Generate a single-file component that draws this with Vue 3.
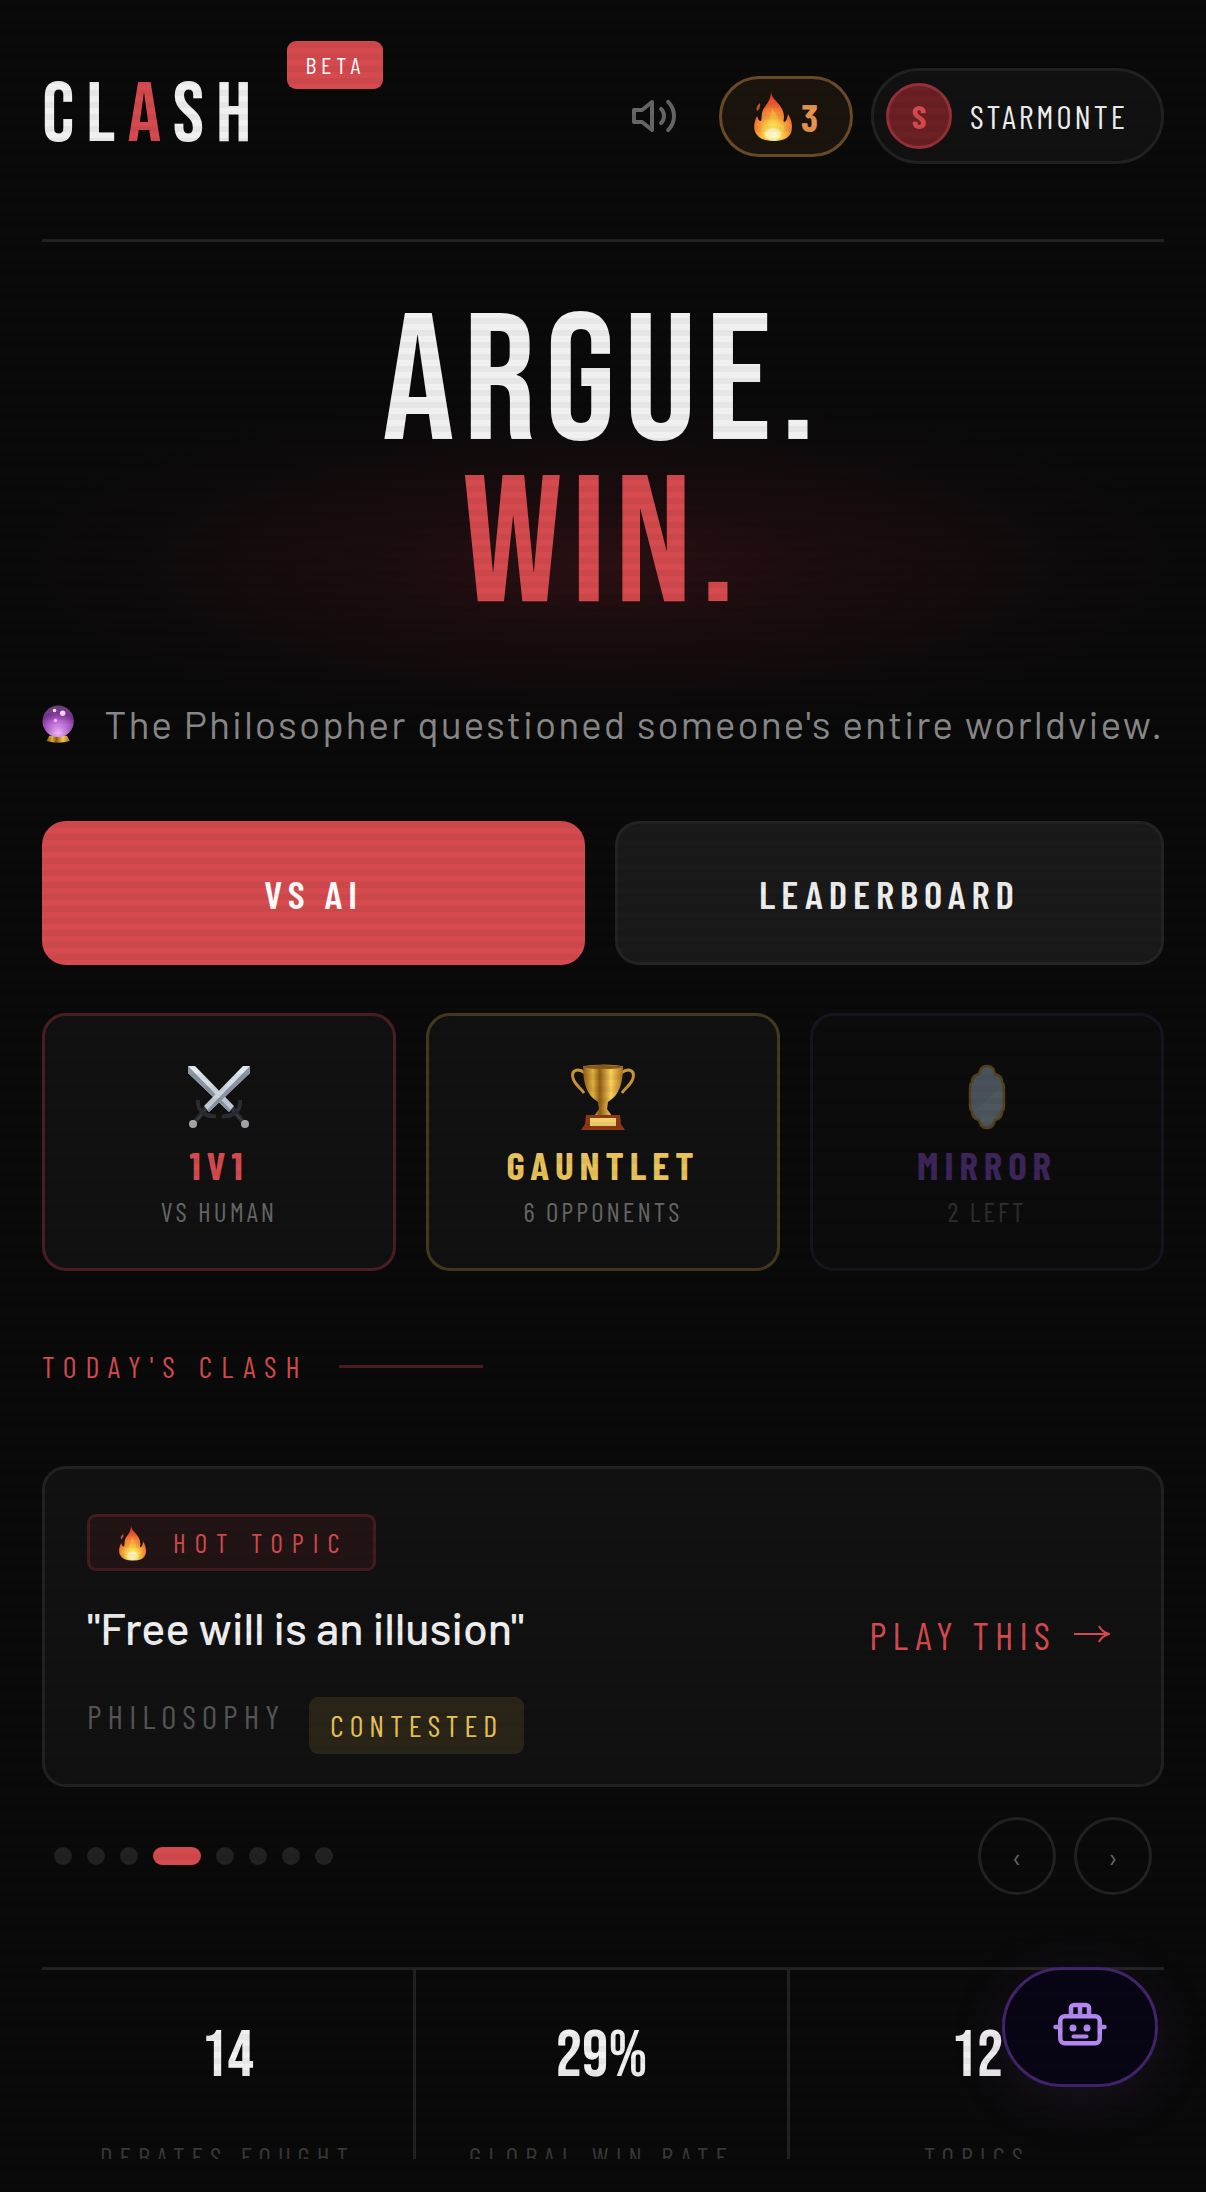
<template>
    <div class="app">
        <main class="page">
            <header class="header">
                <a class="logo" href="#">CL<span class="accent">A</span>SH<span class="beta">BETA</span></a>
                <div class="header-right">
                    <button class="sound" type="button" aria-label="Sound" @click="muted = !muted">
                        <svg viewBox="0 0 24 24" width="48" height="48" fill="none" stroke="currentColor" stroke-width="2" stroke-linecap="round" stroke-linejoin="round">
                            <path d="M11 5 6 9H2v6h4l5 4z" />
                            <path v-show="!muted" d="M15.54 8.46a5 5 0 0 1 0 7.07M19.07 4.93a10 10 0 0 1 0 14.14" />
                        </svg>
                    </button>
                    <div class="streak">
                        <svg class="flame" viewBox="0 0 38 50"><use href="#flame" /></svg>
                        <span>3</span>
                    </div>
                    <button class="profile" type="button">
                        <span class="avatar">S</span>
                        <span>STARMONTE</span>
                    </button>
                </div>
            </header>

            <section class="hero">
                <h1><span>ARGUE.</span><span class="accent">WIN.</span></h1>
                <p class="feed">
                    <svg class="ball" viewBox="0 0 36 42">
                        <path d="M8 34h20l3 6q-13 4-26 0z" fill="url(#gold)" />
                        <circle cx="18" cy="18" r="17.500" fill="url(#orb)" />
                        <circle cx="14" cy="6" r="2" fill="#ffe9ff" />
                        <circle cx="23" cy="9" r="3" fill="#f7d3fb" />
                        <circle cx="15" cy="17" r="2" fill="#f0b4fa" />
                    </svg>
                    <span>The Philosopher questioned someone's entire worldview.</span>
                </p>
            </section>

            <div class="actions">
                <button class="btn btn-primary" type="button">VS AI</button>
                <button class="btn btn-dark" type="button">LEADERBOARD</button>
            </div>

            <div class="modes">
                <button v-for="m in modes" :key="m.name" type="button" class="mode" :class="m.name">
                    <svg viewBox="0 0 66 66" width="66" height="66"><use :href="'#' + m.icon" /></svg>
                    <strong>{{ m.title }}</strong>
                    <small>{{ m.sub }}</small>
                </button>
            </div>

            <h2 class="section-label">TODAY'S CLASH</h2>

            <article class="topic">
                <div class="topic-info">
                    <span class="hot"><svg viewBox="0 0 38 50"><use href="#flame" /></svg>HOT TOPIC</span>
                    <h3>"Free will is an illusion"</h3>
                    <div class="meta">
                        <span class="category">PHILOSOPHY</span>
                        <span class="contested">CONTESTED</span>
                    </div>
                </div>
                <button class="play" type="button">
                    PLAY THIS
                    <svg viewBox="0 0 36 18" width="36" height="18" fill="none" stroke="currentColor" stroke-width="2"><path d="M0 9h34M25 1q3 6 10 8-7 2-10 8" /></svg>
                </button>
            </article>

            <div class="pager">
                <div class="dots">
                    <button v-for="i in 8" :key="i" type="button" class="dot" :class="{ active: i === current }" :aria-label="'Topic ' + i" @click="current = i"></button>
                </div>
                <div class="arrows">
                    <button type="button" aria-label="Previous" @click="step(-1)">‹</button>
                    <button type="button" aria-label="Next" @click="step(1)">›</button>
                </div>
            </div>

            <div class="stats">
                <div v-for="s in stats" :key="s.label" class="stat">
                    <b>{{ s.value }}</b>
                    <span>{{ s.label }}</span>
                </div>
            </div>
        </main>

        <button class="bot" type="button" aria-label="Assistant">
            <svg viewBox="0 0 54 44" width="54" height="44" fill="none" stroke="currentColor" stroke-width="4.500" stroke-linecap="round">
                <rect x="7.250" y="14.250" width="39.500" height="27" rx="4.500" />
                <path d="M18 14V6a3 3 0 0 1 3-3h12a3 3 0 0 1 3 3v8M27 3v11M2.500 25H7M47 25h4.500" />
                <path d="M20.500 34.500h13" stroke-width="4" />
                <circle cx="20" cy="26" r="3.500" fill="currentColor" stroke="none" />
                <circle cx="34" cy="26" r="3.500" fill="currentColor" stroke="none" />
            </svg>
        </button>

        <div class="scanlines"></div>

        <!-- 图标定义 -->
        <svg class="defs" width="0" height="0" aria-hidden="true">
            <defs>
                <linearGradient id="gold" x1="0" x2="1" y1="0" y2="0">
                    <stop offset="0" stop-color="#8a5a14" />
                    <stop offset=".25" stop-color="#e0b040" />
                    <stop offset=".42" stop-color="#8f5c16" />
                    <stop offset=".7" stop-color="#fbd05c" />
                    <stop offset="1" stop-color="#a8701c" />
                </linearGradient>
                <radialGradient id="orb" cx=".5" cy=".85" r=".8">
                    <stop offset="0" stop-color="#f3b8fa" />
                    <stop offset=".45" stop-color="#b565d0" />
                    <stop offset=".8" stop-color="#7a3290" />
                    <stop offset="1" stop-color="#6b4580" />
                </radialGradient>
                <radialGradient id="fire" cx=".5" cy=".88" r=".8">
                    <stop offset="0" stop-color="#fffbe0" />
                    <stop offset=".2" stop-color="#ffe75a" />
                    <stop offset=".45" stop-color="#f7a63a" />
                    <stop offset=".8" stop-color="#ec5a2c" />
                    <stop offset="1" stop-color="#dd3a22" />
                </radialGradient>
                <linearGradient id="blade" x1="0" x2="1" y1="0" y2="1">
                    <stop offset="0" stop-color="#e9f1f8" />
                    <stop offset="1" stop-color="#b9c4cf" />
                </linearGradient>
                <symbol id="flame" viewBox="0 0 38 50">
                    <path d="M17 0c0 4 2 7 5 10 5 5 8 10 8 16 0 2-1 4 0 5 2 0 3-3 4-8 4 6 5 13 3 19-3 6-9 8-18 8S4 47 1 41c-2-6 0-12 2-16 1 3 2 5 4 5 1-2 0-6 2-11 3-6 8-9 8-19z" fill="url(#fire)" />
                    <path d="M18 16c1 5 6 8 6 14 0 4 3 6 6 4 1 8-3 14-11 14S7 42 9 35c2 1 4 0 5-3 1-5 4-8 4-16z" fill="#ffd94f" opacity=".4" />
                    <ellipse cx="19" cy="43" rx="8" ry="6" fill="#fffbe2" opacity=".6" />
                    <path d="M6 12q-5 4-3 8 4-3 3-8" fill="#c9502f" />
                </symbol>
                <symbol id="swords" viewBox="0 0 66 66">
                    <g id="sword">
                        <path d="M46 44 57 58" stroke="#2b2d33" stroke-width="5" />
                        <path d="M47 46 55 56" stroke="#4b4e56" stroke-width="1" />
                        <circle cx="59" cy="60" r="4" fill="#a9a9ad" />
                        <path d="M2 2h7l39 40-5 6L2 9z" fill="url(#blade)" />
                        <path d="m2 2 43 44-2 2L2 9z" fill="#8a95a3" />
                        <path d="M54 36q1 8-5 13-6 4-13 3" fill="none" stroke="#2b2d33" stroke-width="4" />
                    </g>
                    <use href="#sword" transform="matrix(-1 0 0 1 66 0)" />
                </symbol>
                <symbol id="trophy" viewBox="0 0 66 66">
                    <path d="M15 9C7 3 1 7 3 14c1 6 8 10 11 15M51 9c8-6 14-2 12 5-1 6-8 10-11 15" fill="none" stroke="#c8953a" stroke-width="3" />
                    <path d="M13 2q20-3 40 0c0 16-3 29-15 36l-1 7 5 7H24l5-7-1-7C16 31 13 18 13 2z" fill="url(#gold)" />
                    <ellipse cx="33" cy="3" rx="19" ry="2" fill="#8c5c16" />
                    <path d="M16 51h34l1 9 4 6H11l4-6z" fill="#8b3916" />
                    <path d="M20 54h26v8H20z" fill="#f2cf70" />
                </symbol>
                <symbol id="mirror" viewBox="0 0 66 66">
                    <path d="M33 2c6 0 7 4 8 8 5 1 7 4 7 8 2 2 2 4 2 6v18c0 2 0 4-2 6 0 4-2 7-7 8-1 4-2 8-8 8s-7-4-8-8c-5-1-7-4-7-8-2-2-2-4-2-6V24c0-2 0-4 2-6 0-4 2-7 7-8 1-4 2-8 8-8z" fill="#a9bfd4" stroke="#c59433" stroke-width="2.500" />
                    <path d="M48 22v20q-3 4-2 5-5 5-7 7-1 7-6 7-6 0-6-8l-7-5z" fill="#c6d6e6" opacity=".5" />
                </symbol>
            </defs>
        </svg>
    </div>
</template>

<script setup>
import { ref } from 'vue'

const muted = ref(false)
// 当前话题
const current = ref(4)

const modes = [
    { name: 'duel', icon: 'swords', title: '1V1', sub: 'VS HUMAN' },
    { name: 'gauntlet', icon: 'trophy', title: 'GAUNTLET', sub: '6 OPPONENTS' },
    { name: 'reflect', icon: 'mirror', title: 'MIRROR', sub: '2 LEFT' },
]

const stats = [
    { value: '14', label: 'DEBATES FOUGHT' },
    { value: '29%', label: 'GLOBAL WIN RATE' },
    { value: '12', label: 'TOPICS' },
]

const step = (n) => {
    current.value = (current.value - 1 + n + 8) % 8 + 1
}
</script>

<style>
body {
    margin: 0;
    background: #0a0a0a;
}
</style>

<style scoped>
.app {
    --red: #d44a4e;
    --line: #222;
    --display: 'Bebas Neue', 'Liberation Sans Narrow', sans-serif;
    box-sizing: border-box;
    height: 100vh;
    padding-bottom: 33px;
    background: #0a0a0a;
    color: #f0f0f0;
    font-family: 'Barlow Condensed', 'Liberation Sans Narrow', Roboto, sans-serif;
    font-weight: 400;
}

.page {
    box-sizing: border-box;
    height: 100%;
    padding: 68px 42px 0;
    overflow: hidden;
}

button {
    box-sizing: border-box;
    margin: 0;
    padding: 0;
    border: 0;
    background: none;
    color: inherit;
    font-family: inherit;
    cursor: pointer;
}

.accent {
    color: var(--red);
}

.header {
    display: flex;
    justify-content: space-between;
    align-items: flex-start;
    padding-bottom: 75px;
    border-bottom: 3px solid var(--line);
}

.logo {
    position: relative;
    color: inherit;
    font-family: var(--display);
    font-size: 84px;
    line-height: 96px;
    letter-spacing: 12px;
    text-decoration: none;
}

.beta {
    position: absolute;
    top: -27px;
    left: calc(100% + 24px);
    padding: 0 18px;
    border-radius: 9px;
    background: var(--red);
    color: #fff;
    font-family: 'Barlow Condensed', 'Liberation Sans Narrow', Roboto, sans-serif;
    font-size: 24px;
    line-height: 48px;
    letter-spacing: 5px;
}

.header-right {
    display: flex;
    align-items: center;
    gap: 18px;
}

.sound {
    display: flex;
    margin-right: 23px;
    color: #666;
}

.streak {
    box-sizing: border-box;
    display: flex;
    align-items: center;
    justify-content: center;
    gap: 9px;
    width: 134px;
    height: 81px;
    border: 3px solid #6b4a2a;
    border-radius: 41px;
    background: #1a140d;
    color: #e8964f;
    font-size: 39px;
    font-weight: 700;
}

.flame {
    width: 38px;
    height: 50px;
}

.profile {
    display: flex;
    align-items: center;
    gap: 18px;
    height: 96px;
    padding: 0 33px 0 12px;
    border: 3px solid var(--line);
    border-radius: 48px;
    background: #111;
    font-size: 33px;
    letter-spacing: 3px;
}

.avatar {
    box-sizing: border-box;
    width: 66px;
    height: 66px;
    border: 3px solid #93303a;
    border-radius: 50%;
    background: #6b2023;
    color: var(--red);
    font-weight: 700;
    line-height: 60px;
    letter-spacing: 0;
}

.hero {
    position: relative;
    padding-top: 62px;
    text-align: center;
}

.hero::before {
    content: '';
    position: absolute;
    inset: 168px -42px 0;
    background: radial-gradient(ellipse 50% 50% at 50% 46%, #2b1013 0%, #1c0d0f 35%, #100b0c 72%, #0a0a0a 100%);
}

.hero h1 {
    position: relative;
    margin: 0;
    font-family: var(--display);
    font-size: 180px;
    font-weight: 400;
    line-height: 162px;
    letter-spacing: 9px;
}

.hero h1 span {
    display: block;
}

.feed {
    position: relative;
    display: flex;
    align-items: center;
    justify-content: center;
    gap: 30px;
    margin: 72px 0 0;
    color: #888;
    font-family: Barlow, Roboto, sans-serif;
    font-size: 39px;
    line-height: 48px;
    letter-spacing: 2px;
    white-space: nowrap;
}

.ball {
    width: 36px;
    height: 42px;
}

.actions {
    display: flex;
    gap: 30px;
    margin-top: 73px;
}

.btn {
    flex: 1;
    height: 144px;
    border-radius: 24px;
    font-size: 39px;
    font-weight: 600;
    letter-spacing: 6px;
}

.btn-primary {
    background: var(--red);
    color: #fff;
}

.btn-dark {
    border: 3px solid #242424;
    background: #1a1a1a;
}

.modes {
    display: grid;
    grid-template-columns: repeat(3, 1fr);
    gap: 30px;
    margin-top: 48px;
}

.mode {
    display: flex;
    flex-direction: column;
    align-items: center;
    padding: 48px 0 42px;
    border: 3px solid #4a1f24;
    border-radius: 24px;
    background: #111;
    color: var(--red);
}

.mode strong {
    margin-top: 17px;
    font-size: 39px;
    line-height: 36px;
    letter-spacing: 6px;
}

.mode small {
    margin-top: 13px;
    color: #666;
    font-size: 27px;
    line-height: 30px;
    letter-spacing: 3px;
}

.gauntlet {
    border-color: #453a1f;
    color: #e8c35a;
}

.reflect {
    border-color: #2b2540;
    color: #8b4fd0;
    opacity: .4;
}

.section-label {
    display: flex;
    align-items: center;
    gap: 30px;
    margin: 80px 0 0;
    color: var(--red);
    font-size: 30px;
    font-weight: 400;
    line-height: 30px;
    letter-spacing: 9px;
}

.section-label::after {
    content: '';
    width: 144px;
    height: 3px;
    background: #4d1f22;
}

.topic {
    display: flex;
    align-items: center;
    justify-content: space-between;
    margin-top: 85px;
    padding: 45px 42px 30px;
    border: 3px solid var(--line);
    border-radius: 24px;
    background: #111;
}

.topic-info {
    display: flex;
    flex-direction: column;
    align-items: flex-start;
}

.hot {
    display: flex;
    align-items: center;
    gap: 27px;
    padding: 0 24px 0 29px;
    border: 3px solid #451c20;
    border-radius: 9px;
    background: #221415;
    color: var(--red);
    font-size: 27px;
    line-height: 51px;
    letter-spacing: 9px;
}

.hot svg {
    width: 27px;
    height: 36px;
}

.topic h3 {
    margin: 32px 0 0;
    font-family: Barlow, Roboto, sans-serif;
    font-size: 45px;
    font-weight: 500;
    line-height: 48px;
}

.meta {
    display: flex;
    align-items: flex-start;
    gap: 24px;
    margin-top: 46px;
}

.category {
    color: #555;
    font-size: 33px;
    line-height: 39px;
    letter-spacing: 6px;
}

.contested {
    padding: 0 21px;
    border-radius: 9px;
    background: #2a2518;
    color: #e5c35a;
    font-size: 30px;
    line-height: 57px;
    letter-spacing: 6px;
}

.play {
    display: flex;
    align-items: center;
    gap: 18px;
    margin-right: 9px;
    color: var(--red);
    font-size: 39px;
    letter-spacing: 6px;
}

.pager {
    display: flex;
    align-items: center;
    justify-content: space-between;
    margin-top: 30px;
    padding: 0 12px;
}

.dots {
    display: flex;
    gap: 15px;
}

.dot {
    width: 18px;
    height: 18px;
    border-radius: 9px;
    background: var(--line);
}

.dot.active {
    width: 48px;
    background: var(--red);
}

.arrows {
    display: flex;
    gap: 18px;
}

.arrows button {
    width: 78px;
    height: 78px;
    border: 3px solid var(--line);
    border-radius: 50%;
    color: #666;
    font-size: 30px;
}

.stats {
    display: grid;
    grid-template-columns: repeat(3, 1fr);
    margin-top: 72px;
    border-top: 3px solid var(--line);
}

.stat {
    display: flex;
    flex-direction: column;
    align-items: center;
    padding: 48px 0;
    border-right: 3px solid var(--line);
}

.stat:last-child {
    border-right: 0;
}

.stat b {
    font-family: var(--display);
    font-size: 66px;
    font-weight: 400;
    line-height: 78px;
}

.stat span {
    margin-top: 42px;
    color: #383838;
    font-size: 27px;
    line-height: 36px;
    letter-spacing: 7px;
}

.bot {
    position: fixed;
    right: 48px;
    bottom: 105px;
    display: flex;
    align-items: center;
    justify-content: center;
    width: 156px;
    height: 120px;
    border: 3px solid #42256b;
    border-radius: 60px;
    background: #080614;
    box-shadow: 0 12px 60px rgba(139, 79, 208, .12);
    color: #b388f0;
}

.bot svg {
    margin-bottom: 6px;
}

.scanlines {
    position: fixed;
    inset: 0;
    background: repeating-linear-gradient(transparent 0 6px, rgba(0, 0, 0, .04) 6px 12px);
    pointer-events: none;
}

.defs {
    position: absolute;
}
</style>
